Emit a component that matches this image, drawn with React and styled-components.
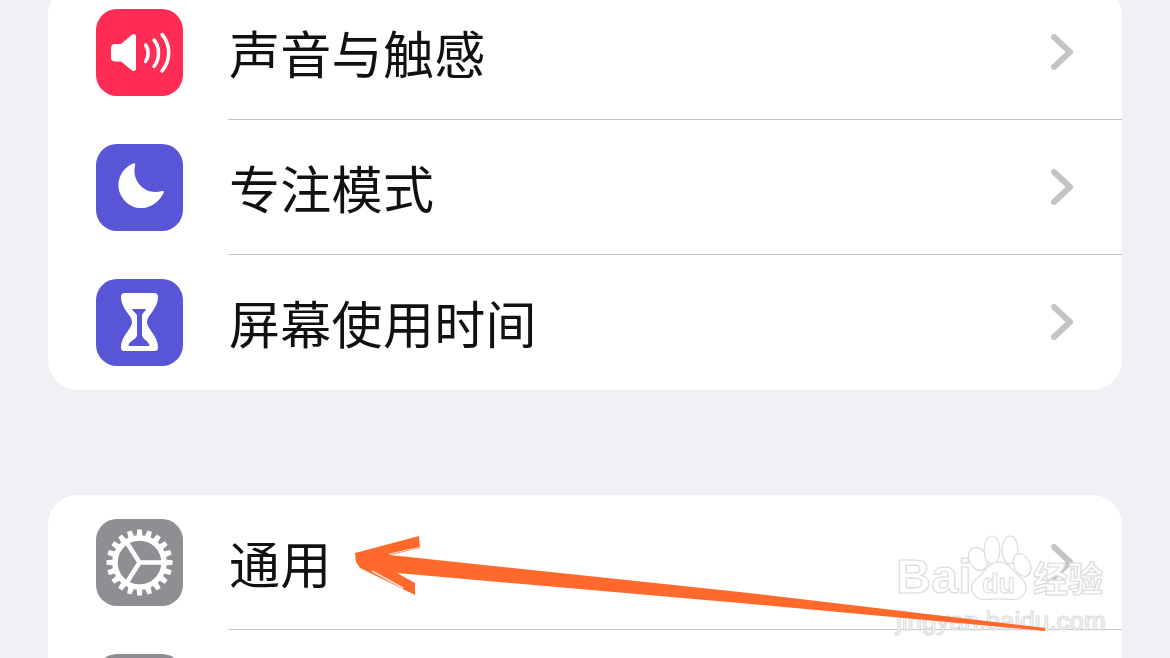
import React from 'react';
import styled, { createGlobalStyle } from 'styled-components';

const GlobalStyle = createGlobalStyle`
  html, body {
    margin: 0;
    padding: 0;
    background: #f0f0f5;
  }
  body {
    font-family: 'Noto Sans CJK SC', 'Liberation Sans', sans-serif;
  }
`;

const Page = styled.div`
  position: relative;
  width: 1170px;
  height: 658px;
  overflow: hidden;
  background: #f0f0f5;
`;

const Groups = styled.div`
  display: flex;
  flex-direction: column;
  gap: 105px;
  margin: -15px 48px 0;
`;

const Card = styled.div`
  background: #fff;
  border-radius: 30px;
  overflow: hidden;
`;

const Row = styled.div`
  display: flex;
  align-items: stretch;
  height: 135px;
  padding-left: 48px;
`;

const Tile = styled.div`
  flex: none;
  align-self: center;
  width: 87px;
  height: 87px;
  border-radius: 21px;
  background: ${(p) => p.$color};
  svg {
    display: block;
  }
`;

const Body = styled.div`
  flex: 1;
  display: flex;
  align-items: center;
  justify-content: space-between;
  margin-left: 45px;
  padding: 0 48px 0 1px;
  border-bottom: 1px solid ${(p) => (p.$last ? 'transparent' : '#c6c6c8')};
`;

const Label = styled.div`
  font-size: 51px;
  font-weight: 400;
  letter-spacing: 0.3px;
  line-height: 1;
  color: #111;
`;

const Overlay = styled.svg`
  position: absolute;
  left: 0;
  top: 0;
`;

const Watermark = styled.div`
  position: absolute;
  left: 896px;
  top: 532px;
  width: 212px;
  color: #fff;
  -webkit-text-stroke: 1.2px #dcdcdc;
`;

const MarkTop = styled.div`
  display: flex;
  align-items: flex-end;
  height: 70px;
`;

const MarkBai = styled.span`
  width: 71px;
  font-family: 'Liberation Sans', sans-serif;
  font-weight: 700;
  font-size: 48px;
  line-height: 50px;
  letter-spacing: 0.5px;
`;

const MarkPaw = styled.svg`
  flex: none;
  margin-bottom: 1px;
`;

const MarkJing = styled.span`
  font-family: 'Noto Sans CJK SC', sans-serif;
  font-weight: 700;
  font-size: 35px;
  line-height: 50px;
`;

const MarkUrl = styled.div`
  margin-top: 3px;
  font-family: 'Liberation Sans', sans-serif;
  font-size: 26px;
  line-height: 32px;
  white-space: nowrap;
`;

const PawDu = styled.text`
  font-family: 'Liberation Sans', sans-serif;
  font-size: 27px;
  font-weight: 700;
  fill: #fff;
  stroke: #dcdcdc;
  stroke-width: 1;
`;

const Chevron = () => (
  <svg width="24" height="36" viewBox="0 0 24 36" fill="none">
    <path d="M4 3 L20 18 L4 33" stroke="#c4c4c6" strokeWidth="6" strokeLinecap="round" strokeLinejoin="round" />
  </svg>
);

const SoundIcon = () => (
  <svg width="87" height="87" viewBox="0 0 87 87" fill="none">
    <path
      d="M19 35 H25 L35.500 26 C38 24 40 25 40 28 V59 C40 62 38 63 35.500 61 L25 52.500 H19 C16.500 52.500 15 51 15 49 V39 C15 36.500 16.500 35 19 35 Z"
      fill="#fff"
    />
    <g stroke="#fff" strokeWidth="3.500" strokeLinecap="round">
      <path d="M49.500 36 C53 40 53 48 49.500 52.500" />
      <path d="M58 31 C64 38 64 50 58 57.500" />
      <path d="M66 25.500 C75 36 75 51 66 62" />
    </g>
  </svg>
);

const MoonIcon = () => (
  <svg width="87" height="87" viewBox="0 0 87 87">
    <path
      d="M37 19.500 C39 18.500 39.500 20 39 22 C35.500 37 49 52 66 47 C68 46.500 68.500 48.500 67 50 C60 63.500 44 68 33 60.500 C17 49 20 27 37 19.500 Z"
      fill="#fff"
    />
  </svg>
);

const HourglassIcon = ({ color }) => (
  <svg width="87" height="87" viewBox="0 0 87 87">
    <path
      d="M29 14 H58 C61 14 62 15.500 62 18 C62 30 51 36 51 43 C51 50 62 57 62 68 C62 71 61 72 58 72 H29 C26 72 25 71 25 68 C25 57 36 50 36 43 C36 36 25 30 25 18 C25 15.500 26 14 29 14 Z"
      fill="#fff"
    />
    <path
      d="M36 30 H50 C49 33 46 34 46 37 V56 C46 60 53 62 53.500 66.500 C53.500 67 53 67 52 67 H34 C33 67 32.500 67 32.500 66.500 C33 62 41 60 41 56 V37 C41 34 37 33 36 30 Z"
      fill={color}
    />
  </svg>
);

const teeth = Array.from({ length: 20 }, (_, i) => (i * 360) / 20);

const GearIcon = () => (
  <svg width="87" height="87" viewBox="0 0 87 87" fill="none">
    <circle cx="43.500" cy="43.500" r="24.500" stroke="#fff" strokeWidth="5.500" />
    {teeth.map((a) => (
      <path key={a} d="M40.500 18 L41.200 10.500 H45.800 L46.500 18 Z" fill="#fff" transform={`rotate(${a} 43.500 43.500)`} />
    ))}
    <path d="M43.500 43.500 H68 M43.500 43.500 L30.500 23 M43.500 43.500 L30.500 64" stroke="#fff" strokeWidth="4.500" />
  </svg>
);

const rows = [
  [
    { label: '声音与触感', color: '#ff2d55', icon: <SoundIcon /> },
    { label: '专注模式', color: '#5856d6', icon: <MoonIcon /> },
    { label: '屏幕使用时间', color: '#5856d6', icon: <HourglassIcon color="#5856d6" />, last: true },
  ],
  [
    { label: '通用', color: '#8e8e93', icon: <GearIcon /> },
    { label: '', color: '#8e8e93', icon: null, last: true },
  ],
];

const Arrow = () => (
  <Overlay width="1170" height="658" viewBox="0 0 1170 658">
    <path
      d="M355 553 L419 536 L420 548 L390 555 L740 592 L1045 628 L1045 631 L740 603 L397 573 L415 583 L415 595 L360 568 L356 562 Z"
      fill="#ff6a2c"
    />
    <path d="M389 554 L419 547.500" stroke="#ffe3d4" strokeWidth="1" />
    <path d="M372 571 L403 588" stroke="#ffe3d4" strokeWidth="1.500" />
  </Overlay>
);

const Mark = () => (
  <Watermark>
    <MarkTop>
      <MarkBai>Bai</MarkBai>
      <MarkPaw width="66" height="66" viewBox="0 0 66 66" fill="#fff" stroke="#dcdcdc" strokeWidth="1.200">
        <ellipse cx="11" cy="24" rx="9" ry="12" transform="rotate(-25 11 24)" />
        <ellipse cx="25" cy="15" rx="8" ry="14" />
        <ellipse cx="43" cy="15" rx="8" ry="14" />
        <ellipse cx="55" cy="30" rx="8" ry="12" transform="rotate(-25 55 30)" />
        <path d="M32 27 C42 27 46 37 54 43 C64 52 58 65 45 64.500 C36 63.500 28 63.500 19 64.500 C6 65 0 53 9 44 C18 38 21 27 32 27 Z" />
        <PawDu x="15" y="58">du</PawDu>
      </MarkPaw>
      <MarkJing>经验</MarkJing>
    </MarkTop>
    <MarkUrl>jingyan.baidu.com</MarkUrl>
  </Watermark>
);

export default function App() {
  return (
    <Page>
      <GlobalStyle />
      <Groups>
        {rows.map((group, i) => (
          <Card key={i}>
            {group.map((row, j) => (
              <Row key={j}>
                <Tile $color={row.color}>{row.icon}</Tile>
                <Body $last={row.last}>
                  <Label>{row.label}</Label>
                  {row.label && <Chevron />}
                </Body>
              </Row>
            ))}
          </Card>
        ))}
      </Groups>
      <Mark />
      <Arrow />
    </Page>
  );
}
